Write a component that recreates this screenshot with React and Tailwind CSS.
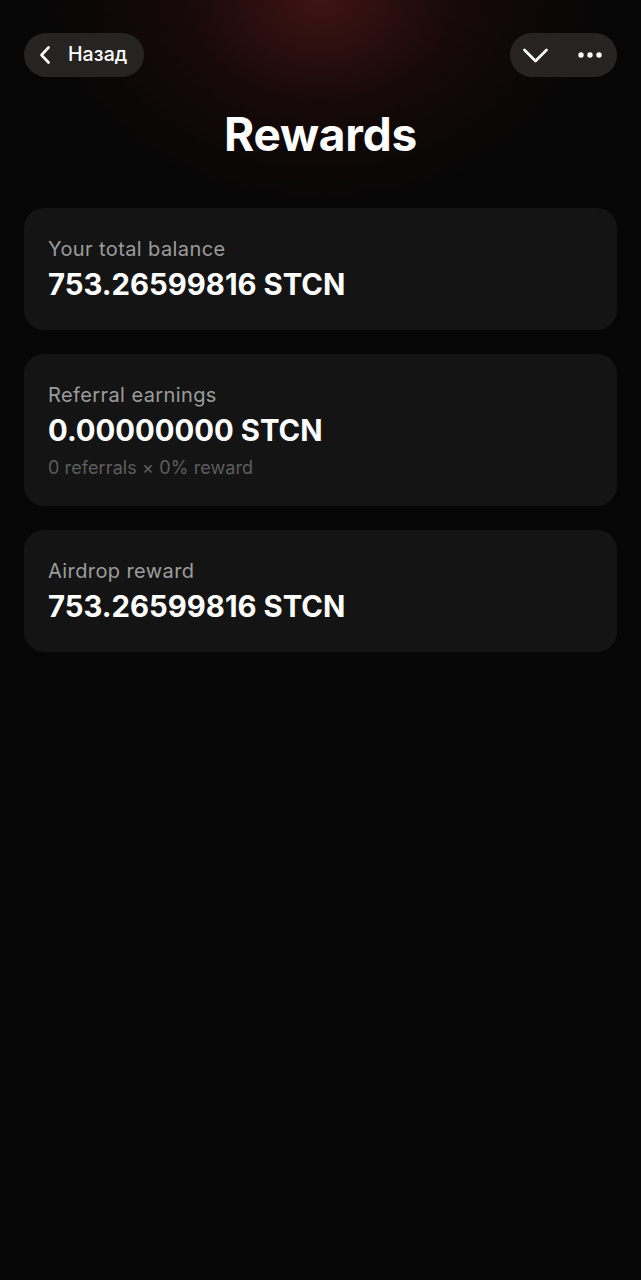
const cards = [
  { label: 'Your total balance', value: '753.26599816 STCN' },
  { label: 'Referral earnings', value: '0.00000000 STCN', note: '0 referrals × 0% reward' },
  { label: 'Airdrop reward', value: '753.26599816 STCN' },
];

function Dots() {
  return (
    <svg width="24" height="6" viewBox="0 0 24 6" fill="white">
      <circle cx="3" cy="3" r="2.7" />
      <circle cx="12" cy="3" r="2.7" />
      <circle cx="21" cy="3" r="2.7" />
    </svg>
  );
}

export default function App() {
  return (
    <div
      className="relative min-h-screen bg-[#060606] text-white overflow-hidden"
      style={{ fontFamily: 'Inter, "Noto Sans", sans-serif' }}
    >
      {/* red glow */}
      <div className="absolute inset-x-0 top-0 h-[260px] pointer-events-none bg-[radial-gradient(ellipse_280px_210px_at_50%_0%,rgba(66,20,20,0.95),rgba(38,12,12,0.5)_50%,rgba(6,6,6,0)_100%)]" />

      <div className="relative px-6 pt-[33px]">
        {/* top bar */}
        <div className="flex items-center justify-between">
          <button className="flex items-center h-11 pl-[15px] pr-[17px] gap-[17px] rounded-full bg-[#2a2727]/90">
            <svg width="12" height="18" viewBox="0 0 12 18" fill="none" stroke="white" strokeWidth="2.6" strokeLinecap="round" strokeLinejoin="round">
              <polyline points="9.5,1.5 2.5,9 9.5,16.5" />
            </svg>
            <span className="text-[19.5px] font-medium tracking-[0.1px]">Назад</span>
          </button>
          <div className="flex items-center h-11 w-[107px] pl-[13px] pr-[15px] justify-between rounded-full bg-[#2a2727]/90">
            <svg width="25" height="15" viewBox="0 0 25 15" fill="none" stroke="white" strokeWidth="2.6" strokeLinecap="round" strokeLinejoin="round">
              <polyline points="1.5,2 12.5,13 23.5,2" />
            </svg>
            <Dots />
          </div>
        </div>

        {/* title */}
        <h1 className="mt-[29px] text-center text-[46px] leading-[56px] font-bold tracking-[-0.2px]">
          Rewards
        </h1>

        {/* cards */}
        <div className="mt-[46px] flex flex-col gap-6">
          {cards.map((c) => (
            <div key={c.label} className="rounded-[20px] bg-[#141414] px-6 pt-[29px] pb-[27px]">
              <p className="text-[20px] leading-[24px] text-[#9c9c9c] tracking-[0.4px]">{c.label}</p>
              <p className="mt-[6px] text-[29.3px] leading-[36px] font-bold">{c.value}</p>
              {c.note && (
                <p className="mt-[8px] text-[18px] leading-[22px] text-[#5e5e5e] tracking-[0.1px]">{c.note}</p>
              )}
            </div>
          ))}
        </div>
      </div>
    </div>
  );
}
